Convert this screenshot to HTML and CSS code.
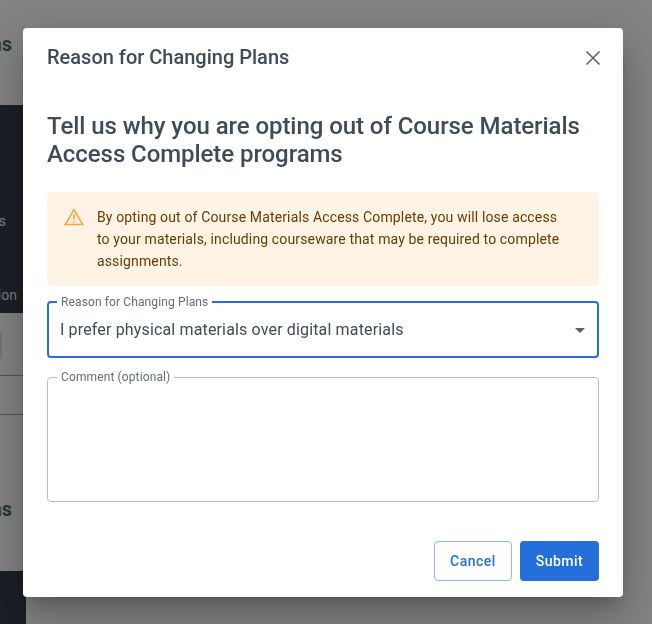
FILE: index.html
```html
<!DOCTYPE html>
<html lang="en">
<head>
<meta charset="utf-8">
<title>Reason for Changing Plans</title>
<link rel="stylesheet" href="styles.css">
</head>
<body>
<div class="page">
  <div class="page-heading first">Programs</div>
  <div class="dark-panel">
    <div class="panel-line one">Materials</div>
    <div class="panel-line two">Option</div>
  </div>
  <div class="chip-row"><span class="chip"></span></div>
  <div class="row"></div>
  <div class="row last"></div>
  <div class="page-heading second">Programs</div>
  <div class="dark-panel bottom"></div>
</div>
<div class="backdrop">
  <section class="modal" role="dialog" aria-label="Reason for Changing Plans">
    <header class="modal-header">
      <h2 class="modal-title">Reason for Changing Plans</h2>
      <button class="close" aria-label="Close">
        <svg viewBox="0 0 16 16" width="16" height="16"><path d="M1.5 1.5 14.5 14.5M14.5 1.5 1.5 14.5" fill="none" stroke="#52606d" stroke-width="1.5"/></svg>
      </button>
    </header>
    <h3 class="question">Tell us why you are opting out of Course Materials Access Complete programs</h3>
    <div class="alert">
      <svg class="alert-icon" viewBox="0 0 20 18" width="20" height="18"><path d="M10 1.6 1.3 16.6H18.7Z" fill="none" stroke="#ffa03c" stroke-width="1.5" stroke-linejoin="miter"/><path d="M10 6.6V11.6M10 12.8V14.6" fill="none" stroke="#ffa03c" stroke-width="1.6"/></svg>
      <p class="alert-text">By opting out of Course Materials Access Complete, you will lose access to your materials, including courseware that may be required to complete assignments.</p>
    </div>
    <fieldset class="field select">
      <legend>Reason for Changing Plans</legend>
      <div class="select-row">
        <span class="value">I prefer physical materials over digital materials</span>
        <svg class="caret" viewBox="0 0 10 5" width="10" height="5"><path d="M0 0H10L5 5Z" fill="#52606d"/></svg>
      </div>
    </fieldset>
    <fieldset class="field comment">
      <legend>Comment (optional)</legend>
    </fieldset>
    <footer class="actions">
      <button class="btn cancel">Cancel</button>
      <button class="btn submit">Submit</button>
    </footer>
  </section>
</div>
</body>
</html>
```
FILE: styles.css
```css
* { box-sizing: border-box; }
html, body { margin: 0; height: 100%; }
body { font-family: Roboto, "Liberation Sans", sans-serif; background: #848484; overflow: hidden; }

.page { width: 26px; height: 624px; overflow: hidden; display: flex; flex-direction: column; }
.page-heading { width: 12px; overflow: hidden; direction: rtl; font-size: 20px; font-weight: 700; line-height: 24px; color: #2f343a; white-space: nowrap; }
.page-heading.first { margin-top: 32px; height: 24px; flex: none; }
.dark-panel { background: #1b2027; height: 208px; margin-top: 49px; flex: none; color: #7d8084; font-size: 14px; }
.panel-line { width: 17px; overflow: hidden; direction: rtl; white-space: nowrap; line-height: 18px; }
.panel-line.one { width: 6px; padding-top: 107px; }
.panel-line.two { padding-top: 56px; }
.chip-row { height: 62px; padding-top: 18px; flex: none; }
.chip { display: block; width: 2px; height: 28px; background: #74777a; border-radius: 0 3px 3px 0; }
.row { height: 39px; border-top: 1px solid #545556; flex: none; }
.row.last { height: 1px; }
.page-heading.second { margin-top: 82px; height: 24px; flex: none; }
.dark-panel.bottom { height: 53px; margin-top: 50px; }

.backdrop { position: fixed; inset: 0; display: flex; padding: 28px 29px 27px 23px; }
.modal { width: 600px; height: 569px; background: #fff; border-radius: 4px; padding: 15px 24px 16px; display: flex; flex-direction: column; box-shadow: 0 11px 15px -7px rgba(0, 0, 0, .2), 0 24px 38px 3px rgba(0, 0, 0, .14), 0 9px 46px 8px rgba(0, 0, 0, .12); }

.modal-header { display: flex; justify-content: space-between; align-items: center; height: 28px; }
.modal-title { margin: 0; font-size: 20px; font-weight: 500; line-height: 28px; color: #3e4c59; }
.close { border: 0; background: none; padding: 0; width: 16px; height: 16px; margin: 2px -2px 0 0; display: flex; }

.question { margin: 41px 0 0; font-size: 24px; font-weight: 500; line-height: 28px; color: #3e4c59; letter-spacing: -.06px; }

.alert { margin-top: 24px; height: 94px; background: #fff3e5; border-radius: 4px; padding: 14px 32px 0 17px; display: flex; gap: 13px; align-items: flex-start; flex: none; }
.alert-icon { flex: none; margin-top: 2px; }
.alert-text { margin: 0; font-size: 14px; line-height: 22px; color: #663c00; letter-spacing: .14px; }

.field { margin: 0; border-radius: 4px; min-width: 0; }
.field legend { padding: 0 4px; margin-left: -4px; font-size: 12px; line-height: 14px; color: #616e7c; letter-spacing: .12px; }
.select { margin-top: 9px; height: 63px; padding: 0 11px; border: 2px solid #246fd9; }
.select legend { margin-left: -3px; }
.select-row { display: flex; align-items: center; margin-top: 9px; }
.select .value { font-size: 16px; line-height: 24px; color: #3e4c59; letter-spacing: .15px; flex: 1; }
.select .caret { margin-right: 1px; }
.comment { margin-top: 12px; height: 132px; padding: 0 13px; border: 1px solid #bdbdbd; }

.actions { margin-top: auto; display: flex; justify-content: flex-end; gap: 8px; }
.btn { height: 40px; border-radius: 4px; font: 500 14px Roboto, "Liberation Sans", sans-serif; letter-spacing: .5px; }
.cancel { width: 78px; background: #fff; color: #246fd9; border: 1px solid #8fb8ef; }
.submit { width: 79px; background: #246fd9; color: #fff; border: 0; }
```
